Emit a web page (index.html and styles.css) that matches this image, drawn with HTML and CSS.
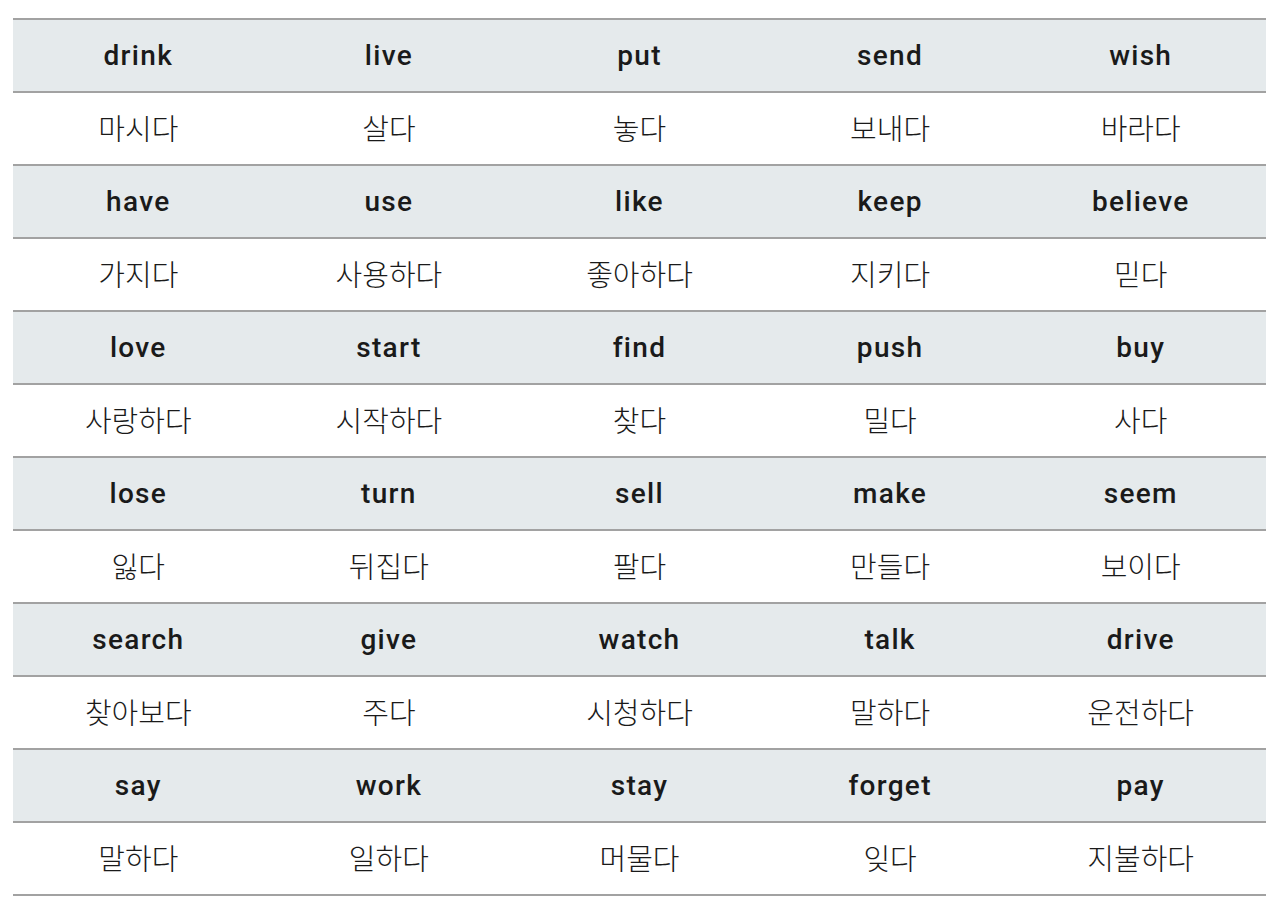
FILE: index.html
```html
<!DOCTYPE html>
<html lang="ko">
<head>
<meta charset="utf-8">
<title>Verbs</title>
<link rel="stylesheet" href="styles.css">
</head>
<body>
<div class="vocab">
  <div class="row en"><span>drink</span><span>live</span><span>put</span><span>send</span><span>wish</span></div>
  <div class="row ko"><span>마시다</span><span>살다</span><span>놓다</span><span>보내다</span><span>바라다</span></div>
  <div class="row en"><span>have</span><span>use</span><span>like</span><span>keep</span><span>believe</span></div>
  <div class="row ko"><span>가지다</span><span>사용하다</span><span>좋아하다</span><span>지키다</span><span>믿다</span></div>
  <div class="row en"><span>love</span><span>start</span><span>find</span><span>push</span><span>buy</span></div>
  <div class="row ko"><span>사랑하다</span><span>시작하다</span><span>찾다</span><span>밀다</span><span>사다</span></div>
  <div class="row en"><span>lose</span><span>turn</span><span>sell</span><span>make</span><span>seem</span></div>
  <div class="row ko"><span>잃다</span><span>뒤집다</span><span>팔다</span><span>만들다</span><span>보이다</span></div>
  <div class="row en"><span>search</span><span>give</span><span>watch</span><span>talk</span><span>drive</span></div>
  <div class="row ko"><span>찾아보다</span><span>주다</span><span>시청하다</span><span>말하다</span><span>운전하다</span></div>
  <div class="row en"><span>say</span><span>work</span><span>stay</span><span>forget</span><span>pay</span></div>
  <div class="row ko"><span>말하다</span><span>일하다</span><span>머물다</span><span>잊다</span><span>지불하다</span></div>
</div>
</body>
</html>
```
FILE: styles.css
```css
html, body {
  margin: 0;
  padding: 0;
  background: #ffffff;
}
body {
  padding: 18px 14px 0 13px;
}
.vocab {
  width: 1253px;
  border-top: 2px solid #a2a2a2;
}
.row {
  display: grid;
  grid-template-columns: repeat(5, 1fr);
  height: 71px;
  border-bottom: 2px solid #a2a2a2;
  align-items: center;
  color: #1a1a1a;
}
.row span {
  text-align: center;
}
.en {
  background: #e5eaec;
  font-family: Roboto, "Liberation Sans", sans-serif;
  font-weight: 500;
  font-size: 28px;
  letter-spacing: 1.3px;
}
.ko {
  background: #ffffff;
  font-family: "Noto Sans CJK KR", "Noto Sans", sans-serif;
  font-weight: 300;
  font-size: 29px;
}
.ko span {
  padding-bottom: 4px;
}
```
